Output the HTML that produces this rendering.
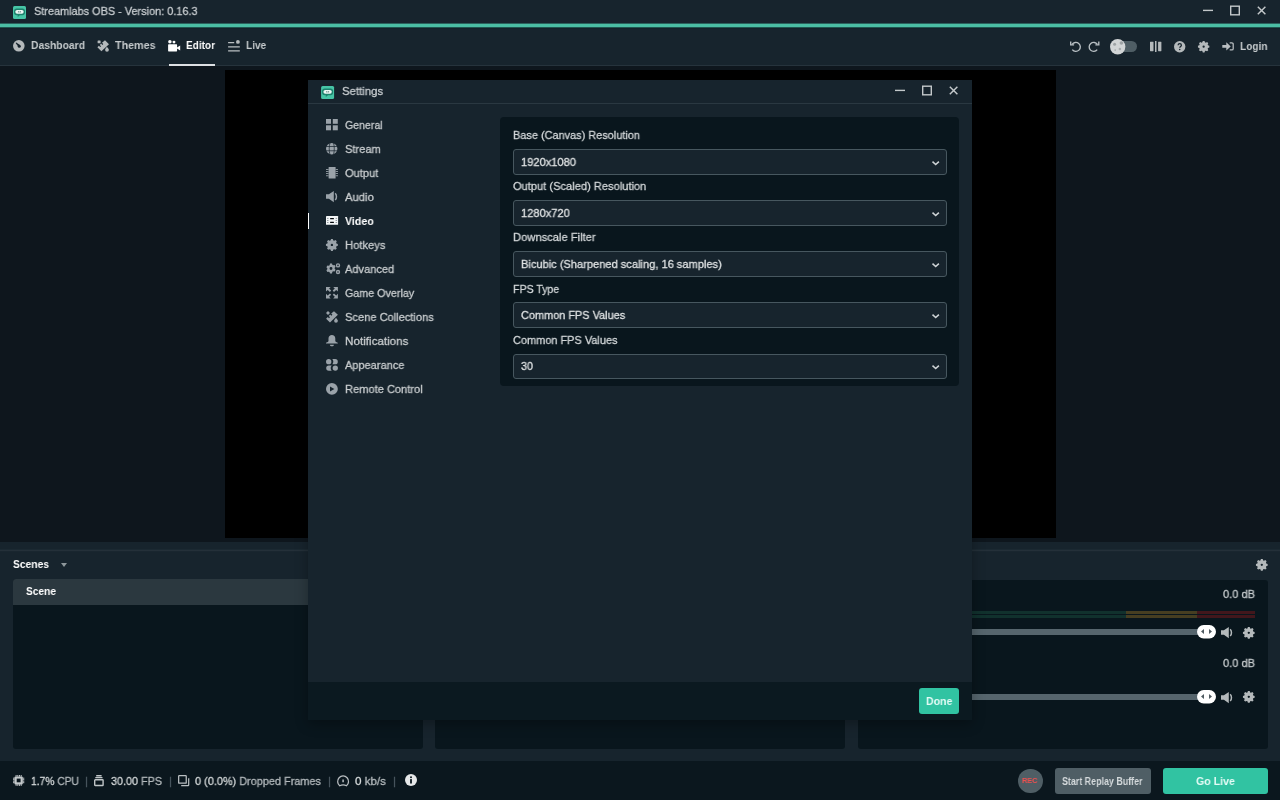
<!DOCTYPE html>
<html lang="en">
<head>
<meta charset="utf-8">
<title>Streamlabs OBS - Version: 0.16.3</title>
<style>
*{box-sizing:border-box;margin:0;padding:0}
html,body{width:1280px;height:800px;overflow:hidden;background:#17242d;font-family:"Liberation Sans",sans-serif;font-size:11.7px;color:#c5cacc;}
.abs{position:absolute}
svg{display:block;position:absolute;overflow:visible}
.t{position:absolute;white-space:nowrap;line-height:14px;height:14px;transform-origin:0 50%;-webkit-text-stroke:.3px currentColor;will-change:transform}
#titlebar{left:0;top:0;width:1280px;height:24px;background:#17242d}
#greenline{left:0;top:23px;width:1280px;height:5px;background:linear-gradient(#2c625d 0,#2c625d 1px,#4bbea4 1px,#4bbea4 4px,#205650 4px,#205650 5px)}
#greenshadow{left:0;top:28px;width:1280px;height:1px;background:#122229}
#nav{left:0;top:29px;width:1280px;height:37px;background:#17242d;border-bottom:1px solid #26333c}
#studio{left:0;top:66px;width:1280px;height:476px;background:#0e161d}
#preview{left:225px;top:70px;width:831px;height:468px;background:#000}
#controls{left:0;top:542px;width:1280px;height:219px;background:#17242d}
#resizebar{left:0;top:549px;width:1280px;height:3px;background:linear-gradient(#1b2932 0,#1b2932 1px,#243039 1px,#243039 2px,#19262f 2px,#19262f 3px)}
.panel{background:#09161d;border-radius:3px;top:579px;height:170px}
#footer{left:0;top:761px;width:1280px;height:39px;background:#0b171e}
.sep{color:#4a585f}
#modal{left:308px;top:80px;width:664px;height:640px;background:#17242d;box-shadow:0 4px 12px rgba(0,0,0,.3)}
#mtitleline{left:0;top:23px;width:664px;height:1px;background:#2a3841}
#mfooter{left:0;top:602px;width:664px;height:38px;background:#0b1920}
#content{left:192px;top:37px;width:459px;height:269px;background:#09161d;border-radius:4px}
.lbl{color:#d3d7d9}
.sel{position:absolute;left:13px;width:433.5px;height:25.5px;background:#17242d;border:1px solid #47575f;border-radius:3px}
.sel .t{left:6.500px;top:4.600px;color:#dfe2e3}
.sel svg{left:417.700px;top:10.600px}
.mi{color:#c9cdcf}
.t[style*="font-weight:bold"]{-webkit-text-stroke:0}
#apptitle{transform:scaleX(0.932)}
#n1{transform:scaleX(0.885)}
#n2{transform:scaleX(0.917)}
#n3{transform:scaleX(0.859)}
#n4{transform:scaleX(0.855)}
#n5{transform:scaleX(0.861)}
#scenes{transform:scaleX(0.879)}
#scene{transform:scaleX(0.871)}
#db1{transform:scaleX(0.947)}
#db2{transform:scaleX(0.947)}
#f1{transform:scaleX(0.879)}
#f2{transform:scaleX(0.923)}
#f3{transform:scaleX(0.932)}
#f4{transform:scaleX(0.993)}
#mtitle{transform:scaleX(0.971)}
#m1{transform:scaleX(0.906)}
#m2{transform:scaleX(0.948)}
#m3{transform:scaleX(0.952)}
#m4{transform:scaleX(0.963)}
#m5{transform:scaleX(0.911)}
#m6{transform:scaleX(0.957)}
#m7{transform:scaleX(0.945)}
#m8{transform:scaleX(0.918)}
#m9{transform:scaleX(0.949)}
#m10{transform:scaleX(0.996)}
#m11{transform:scaleX(0.942)}
#m12{transform:scaleX(0.949)}
#l1{transform:scaleX(0.935)}
#l2{transform:scaleX(0.950)}
#l3{transform:scaleX(0.956)}
#l4{transform:scaleX(0.905)}
#l5{transform:scaleX(0.937)}
#s1{transform:scaleX(0.952)}
#s2{transform:scaleX(0.952)}
#s3{transform:scaleX(0.948)}
#s4{transform:scaleX(0.934)}
#s5{transform:scaleX(0.922)}
#done{transform:scaleX(0.904)}
#srb{transform:scaleX(0.808)}
#golive{transform:scaleX(0.910)}
#rec{transform:scaleX(0.918)}
</style>
</head>
<body>
<!-- main window title bar -->
<div id="titlebar" class="abs"></div>
<div id="greenline" class="abs"></div>
<div id="greenshadow" class="abs"></div>
<div id="nav" class="abs"></div>
<div id="studio" class="abs"></div>
<div id="preview" class="abs"></div>
<div id="controls" class="abs"></div>
<div id="resizebar" class="abs"></div>
<div id="footer" class="abs"></div>

<div id="main-text">
<span class="t" id="apptitle" style="left:33.5px;top:4px;color:#c8cdd0">Streamlabs OBS - Version: 0.16.3</span>
<span class="t" id="n1" style="left:30.5px;top:38px;color:#c5cacc;font-weight:bold">Dashboard</span>
<span class="t" id="n2" style="left:115px;top:38px;color:#c5cacc;font-weight:bold">Themes</span>
<span class="t" id="n3" style="left:186px;top:38px;color:#fff;font-weight:bold">Editor</span>
<span class="t" id="n4" style="left:246px;top:38px;color:#c5cacc;font-weight:bold">Live</span>
<span class="t" id="n5" style="left:1239.500px;top:38.600px;color:#c5cacc;font-weight:bold">Login</span>
<div class="abs" style="left:169px;top:64px;width:46px;height:2px;background:#dde0e3"></div>
</div>


<!-- header icons -->
<svg id="logo1" style="left:13px;top:5.5px" width="13" height="13" viewBox="0 0 13 13"><rect width="13" height="13" rx="1.500" fill="#47c5a6"/><path d="M3.700 2.500h5.600a2.700 2.700 0 0 1 2.700 2.700v1.400a2.700 2.700 0 0 1-2.700 2.700H6.900L4.700 11V9.300H3.700A2.700 2.700 0 0 1 1 6.600V5.200a2.700 2.700 0 0 1 2.700-2.700z" fill="#1d826c"/><rect x="2.300" y="4" width="8.400" height="3.700" rx="1.850" fill="#eef8f5"/><rect x="4.900" y="5" width="3.200" height="1.500" rx=".6" fill="#7f9f98"/><rect x="6.200" y="4.900" width=".6" height="1.700" fill="#eef8f5"/></svg>
<svg id="ic-dash" style="left:12.7px;top:39.8px" width="11.6" height="11.6" viewBox="0 0 11.6 11.6"><circle cx="5.800" cy="5.800" r="5.800" fill="#b4b9bb"/><path d="M2.600 2.900L3.300 2.400 7.300 5.300 5.700 7.200z" fill="#17242d"/><circle cx="6.300" cy="6.200" r="1.500" fill="#17242d"/></svg>
<svg id="ic-themes" style="left:97px;top:39.8px" width="12.4" height="11.6" viewBox="0 0 12.4 11.6" fill="#b4b9bb"><path d="M8 .3l4 4-7.6 7-4-4L1.9 5.8l1.3 1.3.9-.9L2.8 4.9l1.3-1.3 1.3 1.3.9-.9L5 2.7z"/><rect x=".6" y=".5" width="3" height="2.8" rx=".6"/><path d="M10.1 7.3c1.1 1.5 2 2.3 2 3.1a1.9 1.9 0 0 1-3.8 0c0-.8.8-1.700 1.800-3.100z" transform="translate(-.2 -.6)"/></svg>
<svg id="ic-editor" style="left:168px;top:39.6px" width="12.4" height="11.6" viewBox="0 0 12.4 11.6" fill="#fff"><circle cx="1.9" cy="1.8" r="1.75"/><circle cx="6" cy="2.1" r="1.45"/><rect x=".1" y="4.3" width="9" height="7.1" rx=".6"/><path d="M9 7.400l3.200-2v5l-3.200-2z"/></svg>
<svg id="ic-live" style="left:228px;top:39.600px" width="12" height="12" viewBox="0 0 12 12"><path d="M.1 2.700h6.100M.1 6.800h11.700M.1 10.800h11.700" stroke="#b9bec1" stroke-width="1.300"/><circle cx="9.900" cy="1.900" r="1.900" fill="#b4b9bb"/></svg>
<svg id="ic-undo" style="left:1069.500px;top:40.500px" width="11.500" height="11.500" viewBox="0 0 11.500 11.500" fill="none" stroke="#b9c0c4" stroke-width="1.350"><path d="M2.100 3.400A4.500 4.500 0 1 1 2.300 8.700"/><path d="M.7 .5v3.300h3.400" stroke-linejoin="miter"/></svg>
<svg id="ic-redo" style="left:1087.800px;top:40.500px" width="11.500" height="11.500" viewBox="0 0 11.500 11.500" fill="none" stroke="#b9c0c4" stroke-width="1.350"><path d="M9.400 3.400A4.500 4.500 0 1 0 9.200 8.700"/><path d="M10.800 .5v3.300h-3.400" stroke-linejoin="miter"/></svg>
<div class="abs" style="left:1113px;top:41.200px;width:24px;height:10.800px;border-radius:5.400px;background:#4f5e65"></div>
<svg id="ic-moon" style="left:1109.600px;top:39px" width="15.400" height="15.400" viewBox="0 0 15.400 15.400"><circle cx="7.700" cy="7.700" r="7.700" fill="#d2d5d6"/><circle cx="4.600" cy="5.200" r="1.500" fill="#9ea3a5"/><circle cx="11.400" cy="4" r="1.800" fill="#9ea3a5"/><circle cx="9.900" cy="9.900" r="1.250" fill="#a5aaac"/><circle cx="5.200" cy="11.100" r=".85" fill="#a5aaac"/></svg>
<svg id="ic-cols" style="left:1149.700px;top:41px" width="11.600" height="11" viewBox="0 0 11.600 11" fill="#b4b9bb"><rect x="0" y=".7" width="3.500" height="9.500" rx=".4"/><rect x="5" y="0" width="1.500" height="11"/><rect x="8.100" y=".7" width="3.300" height="9.500" rx=".4"/></svg>
<svg id="ic-help" style="left:1173.800px;top:40.700px" width="11.400" height="11.400" viewBox="0 0 11.400 11.400"><circle cx="5.700" cy="5.700" r="5.700" fill="#b4b9bb"/><path d="M4.100 4.300c0-1 .7-1.600 1.650-1.600s1.650.6 1.650 1.450c0 1.250-1.600 1.250-1.600 2.500" fill="none" stroke="#17242d" stroke-width="1.250"/><circle cx="5.750" cy="8.500" r=".8" fill="#17242d"/></svg>
<svg id="ic-gear1" style="left:1198px;top:41px" width="11.300" height="11.300" viewBox="-10 -10 20 20"><path d="M-1.500-10h3l.9 2.400 1.400.6 2.300-1.100 2.100 2.100-1.100 2.300.6 1.400 2.400.9v3l-2.400.9-.6 1.400 1.100 2.300-2.100 2.100-2.300-1.100-1.400.6-.9 2.400h-3l-.9-2.400-1.400-.6-2.300 1.100-2.100-2.100 1.100-2.300-.6-1.400-2.400-.9v-3l2.400-.9.600-1.400-1.100-2.300 2.100-2.100 2.300 1.100 1.400-.6zM0-2a2 2 0 1 0 0 4 2 2 0 1 0 0-4z" fill-rule="evenodd" fill="#b4b9bb"/></svg>
<svg id="ic-login" style="left:1221.500px;top:42px" width="11.800" height="8.800" viewBox="0 0 11.800 8.800"><path d="M.3 3h4V.2l4.400 4.200L4.300 8.600V5.800h-4z" fill="#b9bec1"/><path d="M7.700 .85h2.200a1.300 1.300 0 0 1 1.300 1.300v4.500a1.300 1.300 0 0 1-1.300 1.300H7.700" fill="none" stroke="#b9bec1" stroke-width="1.250"/></svg>
<!-- window controls -->
<svg id="wc" style="left:1200px;top:4px" width="70" height="14" viewBox="0 0 70 14" fill="none" stroke="#c3c8ca" stroke-width="1.400"><path d="M3 6.400h10"/><rect x="30.700" y="2.200" width="8.600" height="8.600"/><path d="M57.800 2.700l7.600 7.600M65.400 2.700l-7.600 7.600" stroke-width="1.450"/></svg>

<!-- studio controls -->
<span class="t" id="scenes" style="left:13px;top:557px;color:#fff;font-weight:bold">Scenes</span>
<div class="abs" style="left:61px;top:563px;width:0;height:0;border-left:3.5px solid transparent;border-right:3.5px solid transparent;border-top:4px solid #8e979b"></div>
<div class="abs panel" style="left:13px;width:409.5px"></div>
<div class="abs" style="left:13px;top:579px;width:409.500px;height:26px;background:#2b383f;border-radius:3px 3px 0 0"></div>
<span class="t" id="scene" style="left:26px;top:584px;color:#fff;font-weight:bold">Scene</span>
<div class="abs panel" style="left:435px;width:410px"></div>
<div class="abs panel" style="left:858px;width:409.500px;top:580px;height:169px"></div>

<!-- mixer -->
<div id="mixer">
<svg style="left:1256px;top:558.700px" width="11.600" height="11.600" viewBox="-10 -10 20 20"><path d="M-1.500-10h3l.9 2.400 1.400.6 2.300-1.100 2.100 2.100-1.100 2.300.6 1.400 2.400.9v3l-2.400.9-.6 1.400 1.100 2.300-2.100 2.100-2.300-1.100-1.400.6-.9 2.400h-3l-.9-2.400-1.400-.6-2.300 1.100-2.100-2.100 1.100-2.300-.6-1.400-2.400-.9v-3l2.400-.9.600-1.400-1.100-2.300 2.100-2.100 2.300 1.100 1.400-.6zM0-2a2 2 0 1 0 0 4 2 2 0 1 0 0-4z" fill-rule="evenodd" fill="#b4b9bb"/></svg>
<div class="abs" style="left:871px;top:611px;width:254.500px;height:3px;background:#11312d"></div>
<div class="abs" style="left:871px;top:615px;width:254.500px;height:3px;background:#11312d"></div>
<div class="abs" style="left:1125.500px;top:611px;width:71.500px;height:3px;background:#463e21"></div>
<div class="abs" style="left:1125.500px;top:615px;width:71.500px;height:3px;background:#463e21"></div>
<div class="abs" style="left:1197px;top:611px;width:57.500px;height:3px;background:#42171c"></div>
<div class="abs" style="left:1197px;top:615px;width:57.500px;height:3px;background:#42171c"></div>

<div class="abs" style="left:871px;top:629px;width:335px;height:6px;border-radius:3px;background:#56656d"></div>
<svg style="left:1197px;top:625.3px" width="19" height="13.400" viewBox="0 0 19 13.400"><rect width="19" height="13.400" rx="6.700" fill="#fff"/><path d="M4 6.500L7 4v5zM15 6.500L12 4v5z" fill="#4f5b61"/></svg>
<svg style="left:1221px;top:627.2px" width="12" height="11.400" viewBox="0 0 12 11.400"><path d="M0 3.300h2.900L7.800 0v11.300L2.900 7.800H0z" fill="#b4b9bb"/><path d="M9.200 2.300c1.700 1.600 1.700 5.100 0 6.700" fill="none" stroke="#b4b9bb" stroke-width="1.500"/></svg>
<svg style="left:1243px;top:626.7px" width="11.600" height="11.600" viewBox="-10 -10 20 20"><path d="M-1.500-10h3l.9 2.400 1.400.6 2.300-1.100 2.100 2.100-1.100 2.300.6 1.400 2.400.9v3l-2.400.9-.6 1.400 1.100 2.300-2.100 2.100-2.300-1.100-1.400.6-.9 2.400h-3l-.9-2.400-1.400-.6-2.300 1.100-2.100-2.100 1.100-2.300-.6-1.400-2.400-.9v-3l2.400-.9.600-1.400-1.100-2.300 2.100-2.100 2.300 1.100 1.400-.6zM0-2a2 2 0 1 0 0 4 2 2 0 1 0 0-4z" fill-rule="evenodd" fill="#b4b9bb"/></svg>

<div class="abs" style="left:871px;top:693.7px;width:335px;height:6px;border-radius:3px;background:#56656d"></div>
<svg style="left:1197px;top:690.0px" width="19" height="13.400" viewBox="0 0 19 13.400"><rect width="19" height="13.400" rx="6.700" fill="#fff"/><path d="M4 6.500L7 4v5zM15 6.500L12 4v5z" fill="#4f5b61"/></svg>
<svg style="left:1221px;top:691.9000000000001px" width="12" height="11.400" viewBox="0 0 12 11.400"><path d="M0 3.300h2.900L7.800 0v11.300L2.900 7.800H0z" fill="#b4b9bb"/><path d="M9.200 2.300c1.700 1.600 1.700 5.100 0 6.700" fill="none" stroke="#b4b9bb" stroke-width="1.500"/></svg>
<svg style="left:1243px;top:691.4000000000001px" width="11.600" height="11.600" viewBox="-10 -10 20 20"><path d="M-1.500-10h3l.9 2.400 1.400.6 2.300-1.100 2.100 2.100-1.100 2.300.6 1.400 2.400.9v3l-2.400.9-.6 1.400 1.100 2.300-2.100 2.100-2.300-1.100-1.400.6-.9 2.400h-3l-.9-2.400-1.400-.6-2.300 1.100-2.100-2.100 1.100-2.300-.6-1.400-2.400-.9v-3l2.400-.9.600-1.400-1.100-2.300 2.100-2.100 2.300 1.100 1.400-.6zM0-2a2 2 0 1 0 0 4 2 2 0 1 0 0-4z" fill-rule="evenodd" fill="#b4b9bb"/></svg>

<span class="t" id="db1" style="left:1222.500px;top:587px;color:#c5cacc">0.0 dB</span>
<span class="t" id="db2" style="left:1222.500px;top:656px;color:#c5cacc">0.0 dB</span>
</div>

<!-- footer -->
<div id="footer-text">
<svg id="fi1" style="left:12.700px;top:775.200px" width="11.300" height="10.900" viewBox="0 0 11.300 10.900"><rect x="1.500" y="1.500" width="8.300" height="7.900" rx="1" fill="#c3c8ca"/><rect x="3.700" y="3.600" width="3.900" height="3.700" fill="#0b171e"/><path d="M3.100 0v1.700M4.800 0v1.700M6.500 0v1.700M8.200 0v1.700M3.100 9.200v1.700M4.800 9.200v1.700M6.500 9.200v1.700M8.200 9.200v1.700M0 3.200h1.700M0 4.700h1.700M0 6.200h1.700M0 7.700h1.700M9.600 3.200h1.700M9.600 4.700h1.700M9.600 6.200h1.700M9.600 7.700h1.700" stroke="#c3c8ca" stroke-width="1"/></svg>
<svg id="fi2" style="left:94.200px;top:775.200px" width="9.800" height="11.200" viewBox="0 0 9.800 11.200" fill="none" stroke="#c0c5c7" stroke-width="1.400"><rect x=".7" y="4.700" width="8.400" height="5.800" rx=".6"/><path d="M1.300 2.600h7.200M2.200 .7h5.400"/></svg>
<svg id="fi3" style="left:177.600px;top:775.200px" width="11.400" height="11.400" viewBox="0 0 11.400 11.400" fill="none" stroke="#b9bec1" stroke-width="1.250"><rect x=".65" y=".65" width="7.600" height="7.600" rx=".6"/><path d="M10.700 3.200v6.900a.6.600 0 0 1-.6.600H3.200"/></svg>
<svg id="fi4" style="left:336.700px;top:774.800px" width="12.200" height="12.200" viewBox="0 0 12.200 12.200" fill="none" stroke="#b9bec1" stroke-width="1.250"><path d="M2.700 10.700a5.450 5.450 0 1 1 6.800 0c-2-1.100-4.800-1.100-6.800 0z"/><path d="M6.100 4.500v2.700" stroke-width="1.500"/></svg>
<svg id="fi5" style="left:405px;top:774px" width="12" height="12" viewBox="0 0 12 12"><circle cx="6" cy="6" r="6" fill="#e6e8e9"/><circle cx="6" cy="3.300" r="1" fill="#0b171e"/><rect x="5.100" y="5.100" width="1.800" height="4.400" fill="#0b171e"/></svg>

<span class="t" id="f1" style="left:31px;top:774px;color:#b4babd"><b style="color:#d5d9da;font-weight:normal">1.7%</b> CPU</span>
<span class="t sep" style="left:85px;top:774px">|</span>
<span class="t" id="f2" style="left:111px;top:774px;color:#b4babd"><b style="color:#d5d9da;font-weight:normal">30.00</b> FPS</span>
<span class="t sep" style="left:169px;top:774px">|</span>
<span class="t" id="f3" style="left:195px;top:774px;color:#b4babd"><b style="color:#d5d9da;font-weight:normal">0 (0.0%)</b> Dropped Frames</span>
<span class="t sep" style="left:328px;top:774px">|</span>
<span class="t" id="f4" style="left:355px;top:774px;color:#b4babd"><b style="color:#d5d9da;font-weight:normal">0</b> kb/s</span>
<span class="t sep" style="left:393px;top:774px">|</span>
<div class="abs" style="left:1018px;top:768.5px;width:24.5px;height:24.5px;border-radius:50%;background:#4f5e65"></div>
<span class="t" id="rec" style="left:1022px;top:773.5px;color:#f0504f;font-weight:bold;font-size:8px">REC</span>
<div class="abs" style="left:1055px;top:768px;width:95.5px;height:26px;border-radius:3px;background:#4f5e65"></div>
<span class="t" id="srb" style="left:1062px;top:774px;color:#d5dadc;font-size:11px;font-weight:bold">Start Replay Buffer</span>
<div class="abs" style="left:1163px;top:768px;width:104.5px;height:26px;border-radius:3px;background:#31c3a2"></div>
<span class="t" id="golive" style="left:1196px;top:774px;color:#e4fbf6;font-weight:bold">Go Live</span>
</div>

<!-- settings modal -->
<div id="modal" class="abs">
  <div id="mtitleline" class="abs"></div>
  <div id="mfooter" class="abs"></div>
  <span class="t" id="mtitle" style="left:33.5px;top:3.800px;color:#c8cdd0">Settings</span>
  <div class="abs" style="left:0;top:133px;width:1px;height:16px;background:#fff"></div>
  <span class="t mi" id="m1" style="left:37px;top:38px">General</span>
  <span class="t mi" id="m2" style="left:37px;top:62px">Stream</span>
  <span class="t mi" id="m3" style="left:37px;top:86px">Output</span>
  <span class="t mi" id="m4" style="left:37px;top:110px">Audio</span>
  <span class="t mi" id="m5" style="left:37px;top:134px;color:#fff;font-weight:bold">Video</span>
  <span class="t mi" id="m6" style="left:37px;top:158px">Hotkeys</span>
  <span class="t mi" id="m7" style="left:37px;top:182px">Advanced</span>
  <span class="t mi" id="m8" style="left:37px;top:206px">Game Overlay</span>
  <span class="t mi" id="m9" style="left:37px;top:230px">Scene Collections</span>
  <span class="t mi" id="m10" style="left:37px;top:254px">Notifications</span>
  <span class="t mi" id="m11" style="left:37px;top:278px">Appearance</span>
  <span class="t mi" id="m12" style="left:37px;top:302px">Remote Control</span>

  <!-- modal icons -->
  <svg id="logo2" style="left:12.700px;top:5.600px" width="13.200" height="13" viewBox="0 0 13 13"><rect width="13" height="13" rx="1.500" fill="#47c5a6"/><path d="M3.700 2.500h5.600a2.700 2.700 0 0 1 2.700 2.700v1.400a2.700 2.700 0 0 1-2.700 2.700H6.900L4.700 11V9.300H3.700A2.700 2.700 0 0 1 1 6.600V5.200a2.700 2.700 0 0 1 2.700-2.700z" fill="#1d826c"/><rect x="2.300" y="4" width="8.400" height="3.700" rx="1.850" fill="#eef8f5"/><rect x="4.900" y="5" width="3.200" height="1.500" rx=".6" fill="#7f9f98"/><rect x="6.200" y="4.900" width=".6" height="1.700" fill="#eef8f5"/></svg>
  <svg id="mi1" style="left:18.100px;top:39px" width="11.800" height="11.300" viewBox="0 0 11.800 11.300" fill="#9aa2a9"><rect x="0" y="0" width="5" height="4.800"/><rect x="6.800" y="0" width="5" height="4.800"/><rect x="0" y="6.300" width="5" height="5"/><rect x="6.800" y="6.300" width="5" height="5"/></svg>
  <svg id="mi2" style="left:17.900px;top:62.900px" width="11.400" height="11.400" viewBox="0 0 11.400 11.400"><circle cx="5.700" cy="5.700" r="5.700" fill="#9aa2a9"/><g fill="none" stroke="#17242d" stroke-width=".75"><path d="M0 3.500h11.400M0 7.800h11.400"/><path d="M3.900 0C3 3.500 3 8 3.900 11.400M7.600 0c.9 3.500.9 8 0 11.400"/></g></svg>
  <svg id="mi3" style="left:18px;top:87px" width="12" height="11.500" viewBox="0 0 12 11.500" fill="#9aa2a9"><rect x="2.600" y="0" width="7" height="11.500" rx=".5"/><path d="M0 1.900h2.600v1H0zM0 4h2.600v1H0zM0 6.100h2.600v1H0zM0 8.200h2.600v1H0zM9.600 1.900H12v1H9.600zM9.600 4H12v1H9.600zM9.600 6.100H12v1H9.600zM9.600 8.200H12v1H9.600z" opacity=".85"/></svg>
  <svg id="mi4" style="left:18.100px;top:111px" width="12" height="11.400" viewBox="0 0 12 11.400"><path d="M0 3.300h2.900L7.800 0v11.300L2.900 7.800H0z" fill="#9aa2a9"/><path d="M9.200 2.300c1.700 1.600 1.700 5.100 0 6.700" fill="none" stroke="#9aa2a9" stroke-width="1.500"/></svg>
  <svg id="mi5" style="left:18px;top:136.100px" width="12.100" height="8.800" viewBox="0 0 12.100 8.800"><rect width="12.100" height="8.800" rx=".4" fill="#f4f6f7"/><rect x="4.100" y="2" width="3.800" height="1.300" rx=".3" fill="#050a0d"/><rect x="4.100" y="5.800" width="3.800" height="1.300" rx=".3" fill="#050a0d"/><g fill="#8a9298"><rect x="1" y="1.900" width="1.500" height=".9"/><rect x="1" y="4" width="1.500" height=".9"/><rect x="1" y="6" width="1.500" height=".9"/><rect x="9.600" y="1.900" width="1.500" height=".9"/><rect x="9.600" y="4" width="1.500" height=".9"/><rect x="9.600" y="6" width="1.500" height=".9"/></g></svg>
  <svg id="mi6" style="left:18.100px;top:158.700px" width="11.800" height="11.800" viewBox="-10 -10 20 20"><path d="M-1.500-10h3l.9 2.400 1.400.6 2.300-1.100 2.100 2.100-1.100 2.300.6 1.400 2.400.9v3l-2.400.9-.6 1.400 1.100 2.300-2.100 2.100-2.300-1.100-1.400.6-.9 2.400h-3l-.9-2.400-1.400-.6-2.300 1.100-2.100-2.100 1.100-2.300-.6-1.400-2.400-.9v-3l2.400-.9.600-1.400-1.100-2.300 2.100-2.100 2.300 1.100 1.400-.6zM0-2a2 2 0 1 0 0 4 2 2 0 1 0 0-4z" fill-rule="evenodd" fill="#9aa2a9"/></svg>
  <svg id="mi7" style="left:18px;top:183px" width="14.400" height="11.400" viewBox="0 0 14.400 11.400" fill="#9aa2a9"><g transform="translate(5 5.500) scale(.5)"><path fill-rule="evenodd" d="M-2-10h4l.7 2.500 2 1.100 2.500-.6 2 3.400-1.800 1.900v2.300l1.800 1.900-2 3.400-2.500-.6-2 1.100L2 10h-4l-.7-2.500-2-1.100-2.500.6-2-3.400 1.800-1.900v-2.300l-1.800-1.900 2-3.400 2.500.6 2-1.100zM0-2.900a2.900 2.900 0 1 0 0 5.800 2.900 2.900 0 1 0 0-5.800z"/></g><path fill-rule="evenodd" d="M12 .2a2.200 2.200 0 1 0 0 4.400 2.200 2.200 0 1 0 0-4.400zm0 1.400a.8.800 0 1 1 0 1.600.8.800 0 1 1 0-1.600zM12 6.800a2.200 2.200 0 1 0 0 4.400 2.200 2.200 0 1 0 0-4.400zm0 1.400a.8.800 0 1 1 0 1.600.8.800 0 1 1 0-1.600z"/></svg>
  <svg id="mi8" style="left:18.100px;top:207px" width="11.900" height="11.400" viewBox="0 0 11.900 11.400" fill="#9aa2a9"><path d="M0 0h4.700L3.100 1.600l2.100 2-1.300 1.400-2.200-2.100L0 4.600zM11.900 0v4.600l-1.700-1.700-2.200 2.100-1.300-1.400 2.100-2L7.200 0zM0 11.400V6.800l1.700 1.700 2.200-2.100 1.300 1.400-2.100 2 1.600 1.600zM11.900 11.400H7.200l1.600-1.600-2.100-2 1.300-1.400 2.200 2.100 1.700-1.700z"/></svg>
  <svg id="mi9" style="left:18px;top:230.800px" width="12" height="11.800" viewBox="0 0 12 11.800" fill="#9aa2a9"><path d="M8 .2l3.900 3.500-7.900 7.900L.1 7.700l1.700-1.700 1.200 1.200 1-1-1.200-1.200 1.400-1.400 1.200 1.200 1-1-1.200-1.200z"/><path d="M2 .1l2 2-2 2-2-2z"/><path d="M10 6.700c1 1.400 1.900 2.200 1.900 3.100a1.900 1.900 0 0 1-3.800 0c0-.9.900-1.700 1.900-3.100z"/></svg>
  <svg id="mi10" style="left:18.100px;top:255px" width="11.800" height="11.300" viewBox="0 0 11.800 11.300" fill="#9aa2a9"><path d="M5.900 0c2 0 3.400 1.400 3.400 3.500v2.600c0 .5.300.8.800 1l1.700.7v.6H0v-.6l1.700-.7c.5-.2.800-.5.800-1V3.500C2.500 1.400 3.900 0 5.900 0z"/><path d="M3.900 9.800h4c0 1-.9 1.500-2 1.500s-2-.5-2-1.500z"/></svg>
  <svg id="mi11" style="left:18px;top:278.900px" width="12" height="11.800" viewBox="0 0 12 11.800" fill="#9aa2a9"><circle cx="2.700" cy="2.700" r="2.650"/><path d="M6.300 .1h2.900a2.600 2.600 0 0 1 0 5.200H6.300a4.200 4.200 0 0 0 0-5.200z"/><path d="M5.700 6.500H2.800a2.600 2.600 0 0 0 0 5.200h2.900a4.200 4.200 0 0 1 0-5.200z"/><circle cx="9.300" cy="9.100" r="2.650"/></svg>
  <svg id="mi12" style="left:18.100px;top:302.700px" width="11.800" height="11.800" viewBox="0 0 11.800 11.800"><circle cx="5.900" cy="5.900" r="5.900" fill="#9aa2a9"/><path d="M4 3.400l4.400 2.500L4 8.400z" fill="#17242d"/></svg>
  <svg id="mwc" style="left:584px;top:4px" width="70" height="14" viewBox="0 0 70 14" fill="none" stroke="#c3c8ca" stroke-width="1.400"><path d="M3 6.400h10"/><rect x="30.700" y="2.200" width="8.600" height="8.600"/><path d="M57.800 2.700l7.600 7.600M65.400 2.700l-7.600 7.600" stroke-width="1.450"/></svg>
  <div id="content" class="abs">
    <span class="t lbl" id="l1" style="left:13px;top:11px">Base (Canvas) Resolution</span>
    <div class="sel" style="top:32px"><span class="t" id="s1">1920x1080</span><svg width="7.400" height="4.600" viewBox="0 0 7.400 4.600" fill="none" stroke="#cfd4d6" stroke-width="1.500"><path d="M.5 .6l3.200 3 3.200-3"/></svg></div>
    <span class="t lbl" id="l2" style="left:13px;top:62.2px">Output (Scaled) Resolution</span>
    <div class="sel" style="top:83.15px"><span class="t" id="s2">1280x720</span><svg width="7.400" height="4.600" viewBox="0 0 7.400 4.600" fill="none" stroke="#cfd4d6" stroke-width="1.500"><path d="M.5 .6l3.200 3 3.200-3"/></svg></div>
    <span class="t lbl" id="l3" style="left:13px;top:113.4px">Downscale Filter</span>
    <div class="sel" style="top:134.3px"><span class="t" id="s3">Bicubic (Sharpened scaling, 16 samples)</span><svg width="7.400" height="4.600" viewBox="0 0 7.400 4.600" fill="none" stroke="#cfd4d6" stroke-width="1.500"><path d="M.5 .6l3.200 3 3.200-3"/></svg></div>
    <span class="t lbl" id="l4" style="left:13px;top:164.6px">FPS Type</span>
    <div class="sel" style="top:185.45px"><span class="t" id="s4">Common FPS Values</span><svg width="7.400" height="4.600" viewBox="0 0 7.400 4.600" fill="none" stroke="#cfd4d6" stroke-width="1.500"><path d="M.5 .6l3.200 3 3.200-3"/></svg></div>
    <span class="t lbl" id="l5" style="left:13px;top:215.8px">Common FPS Values</span>
    <div class="sel" style="top:236.6px"><span class="t" id="s5">30</span><svg width="7.400" height="4.600" viewBox="0 0 7.400 4.600" fill="none" stroke="#cfd4d6" stroke-width="1.500"><path d="M.5 .6l3.200 3 3.200-3"/></svg></div>
  </div>
  <div class="abs" style="left:610.5px;top:608px;width:40.5px;height:26px;border-radius:3px;background:#31c3a2"></div>
  <span class="t" id="done" style="left:617.5px;top:614px;color:#e4fbf6;font-weight:bold">Done</span>
</div>
</body>
</html>
